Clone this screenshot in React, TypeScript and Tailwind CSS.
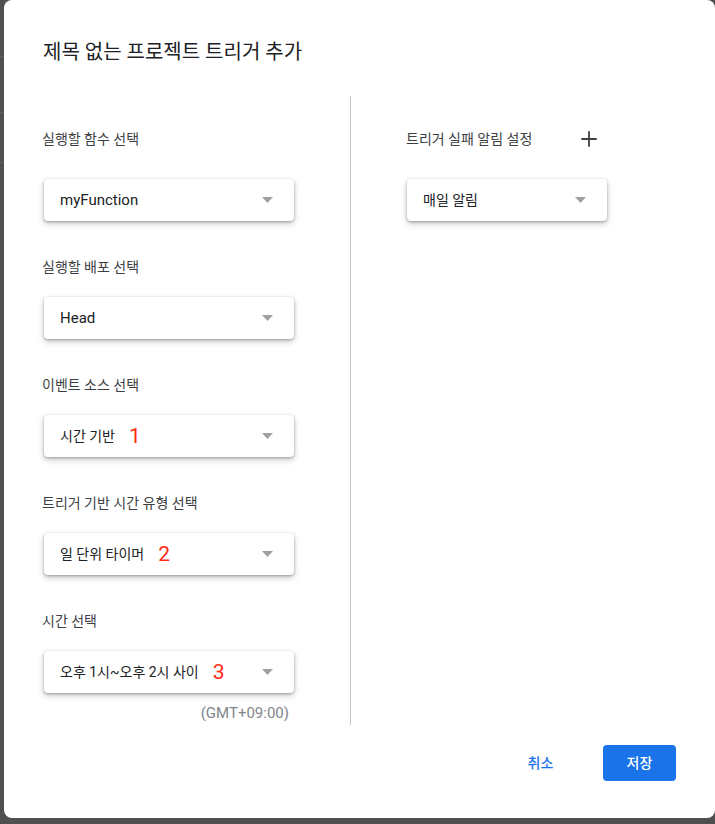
import { Plus } from 'lucide-react'

const font = "font-['Roboto','Noto_Sans_CJK_KR',sans-serif]"

interface Row {
  label: string
  value: string
  num?: string
  latin?: boolean
}

const rows: Row[] = [
  { label: '실행할 함수 선택', value: 'myFunction', latin: true },
  { label: '실행할 배포 선택', value: 'Head', latin: true },
  { label: '이벤트 소스 선택', value: '시간 기반', num: '1' },
  { label: '트리거 기반 시간 유형 선택', value: '일 단위 타이머', num: '2' },
  { label: '시간 선택', value: '오후 1시~오후 2시 사이', num: '3' },
]

function Caret() {
  return (
    <svg width="11" height="6" viewBox="0 0 11 6" className="shrink-0">
      <polygon points="0,0 11,0 5.5,6" fill="#a0a0a0" />
    </svg>
  )
}

function SelectBox({ value, num, latin, width }: { value: string; num?: string; latin?: boolean; width: string }) {
  return (
    <div
      className={`${width} h-[42px] flex items-center justify-between pl-[16px] pr-[21px] bg-white rounded-[4px] shadow-[0_1px_3px_rgba(0,0,0,0.3),0_3px_7px_rgba(0,0,0,0.18)]`}
    >
      <div className="flex items-center">
        <span className={`${latin ? 'text-[15px]' : 'text-[14px]'} text-[#202124] leading-[20px]`}>{value}</span>
        {num && <span className="ml-[14px] text-[21px] leading-[20px] text-[#ff2a12]">{num}</span>}
      </div>
      <Caret />
    </div>
  )
}

export default function App() {
  return (
    <div className={`w-[715px] h-[824px] bg-[#505050] flex ${font}`}>
      <div className="w-[4px] h-full flex flex-col">
        <div className="h-[57px] border-b border-[#5e5e5e]" />
        <div className="h-[56px] border-b border-[#5e5e5e]" />
        <div className="h-[50px] border-b border-[#5e5e5e]" />
      </div>
      <div className="w-[711px] h-[818px] bg-white rounded-[8px] flex flex-col">
        <div className="pt-[40px] pl-[39px] text-[20px] leading-[24px] text-[#202124]">
          제목 없는 프로젝트 트리거 추가
        </div>

        <div className="mt-[32px] h-[629px] flex pl-[38px]">
          <div className="w-[308px] flex flex-col">
            {rows.map((r, i) => (
              <div key={i} className={`flex flex-col ${i === 0 ? 'mt-[33px]' : 'mt-[36px]'}`}>
                <div className="text-[14px] leading-[20px] text-[#3c4043]">{r.label}</div>
                <div className={`${i === 0 ? 'mt-[30px]' : 'mt-[20px]'} ml-[2px]`}>
                  <SelectBox value={r.value} num={r.num} latin={r.latin} width="w-[250px]" />
                </div>
              </div>
            ))}
            <div className="w-[252px] mt-[10px] text-right pr-[5px] text-[15px] leading-[20px] text-[#80868b]">
              (GMT+09:00)
            </div>
          </div>

          <div className="w-px bg-[#c4c6c9]" />

          <div className="pl-[55px] pt-[31px] flex flex-col">
            <div className="w-[195px] flex items-center justify-between">
              <span className="text-[14px] leading-[20px] text-[#3c4043]">트리거 실패 알림 설정</span>
              <Plus size={24} strokeWidth={1.8} color="#3c4043" />
            </div>
            <div className="mt-[28px] ml-[1px]">
              <SelectBox value="매일 알림" width="w-[200px]" />
            </div>
          </div>
        </div>

        <div className="mt-[20px] flex justify-end gap-[26px] pr-[39px]">
          <button className="w-[73px] h-[36px] rounded-[4px] text-[14px] font-medium text-[#1a73e8]">취소</button>
          <button className="w-[73px] h-[36px] rounded-[4px] bg-[#1a73e8] text-[14px] font-medium text-white">저장</button>
        </div>
      </div>
    </div>
  )
}
